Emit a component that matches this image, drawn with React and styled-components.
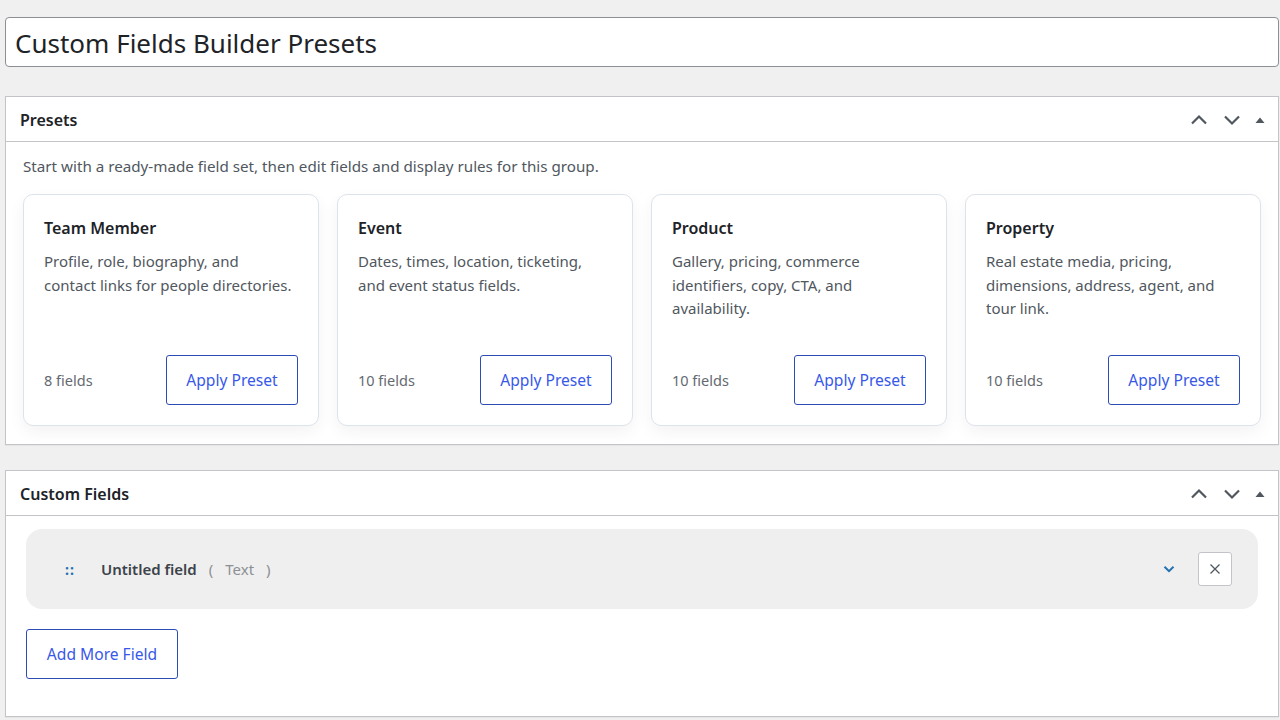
import React from "react";
import styled, { createGlobalStyle } from "styled-components";

const GlobalStyle = createGlobalStyle`
  html, body {
    margin: 0;
    padding: 0;
    background: #f0f0f1;
    font-family: "Noto Sans", "Open Sans", sans-serif;
    color: #1d2327;
  }
`;

const presets = [
  {
    title: "Team Member",
    desc: "Profile, role, biography, and contact links for people directories.",
    count: 8,
  },
  {
    title: "Event",
    desc: "Dates, times, location, ticketing, and event status fields.",
    count: 10,
  },
  {
    title: "Product",
    desc: "Gallery, pricing, commerce identifiers, copy, CTA, and availability.",
    count: 10,
  },
  {
    title: "Property",
    desc: "Real estate media, pricing, dimensions, address, agent, and tour link.",
    count: 10,
  },
];

function App() {
  return (
    <>
      <GlobalStyle />
      <Page>
        <TitleInput>Custom Fields Builder Presets</TitleInput>

        <Box $gap="29px">
          <BoxHeader>
            <BoxTitle>Presets</BoxTitle>
            <HeaderControls />
          </BoxHeader>
          <PresetsBody>
            <Intro>
              Start with a ready-made field set, then edit fields and display
              rules for this group.
            </Intro>
            <CardGrid>
              {presets.map((p) => (
                <Card key={p.title}>
                  <CardTitle>{p.title}</CardTitle>
                  <CardDesc>{p.desc}</CardDesc>
                  <CardFooter>
                    <FieldCount>{p.count} fields</FieldCount>
                    <OutlineButton>Apply Preset</OutlineButton>
                  </CardFooter>
                </Card>
              ))}
            </CardGrid>
          </PresetsBody>
        </Box>

        <Box $gap="25px">
          <BoxHeader>
            <BoxTitle>Custom Fields</BoxTitle>
            <HeaderControls />
          </BoxHeader>
          <FieldsBody>
            <FieldRow>
              <Handle>::</Handle>
              <FieldName>Untitled field</FieldName>
              <FieldType>
                <span>(</span>
                <span>Text</span>
                <span>)</span>
              </FieldType>
              <RowSpacer />
              <Toggle>
                <svg width="14" height="14" viewBox="0 0 14 14">
                  <path
                    d="M2.5 4.8 L7 9.2 L11.5 4.8"
                    fill="none"
                    stroke="#2271b1"
                    strokeWidth="2"
                  />
                </svg>
              </Toggle>
              <RemoveButton>
                <svg width="12" height="12" viewBox="0 0 12 12">
                  <path
                    d="M1.5 1.5 L10.5 10.5 M10.5 1.5 L1.5 10.5"
                    stroke="#50575e"
                    strokeWidth="1.3"
                  />
                </svg>
              </RemoveButton>
            </FieldRow>
            <div>
              <OutlineButton $wide>Add More Field</OutlineButton>
            </div>
          </FieldsBody>
        </Box>
      </Page>
    </>
  );
}

function HeaderControls() {
  return (
    <Controls>
      <CtrlButton>
        <svg width="20" height="20" viewBox="0 0 20 20">
          <path
            d="M3 13.5 L10 6.5 L17 13.5"
            fill="none"
            stroke="#50575e"
            strokeWidth="2.2"
          />
        </svg>
      </CtrlButton>
      <CtrlButton>
        <svg width="20" height="20" viewBox="0 0 20 20">
          <path
            d="M3 6.5 L10 13.5 L17 6.5"
            fill="none"
            stroke="#50575e"
            strokeWidth="2.2"
          />
        </svg>
      </CtrlButton>
      <CtrlButton $small>
        <svg width="12" height="12" viewBox="0 0 12 12">
          <path d="M1.5 9 L6 3.5 L10.5 9 Z" fill="#50575e" />
        </svg>
      </CtrlButton>
    </Controls>
  );
}

export default App;

const Page = styled.div`
  padding: 17px 1px 4px 5px;
  display: flex;
  flex-direction: column;
`;

const TitleInput = styled.div`
  height: 50px;
  box-sizing: border-box;
  border: 1px solid #8c8f94;
  border-radius: 4px;
  background: #fff;
  display: flex;
  align-items: center;
  padding: 2px 9px 0;
  font-size: 26px;
  color: #1d2327;
`;

const Box = styled.div`
  margin-top: ${(p) => p.$gap};
  background: #fff;
  border: 1px solid #c3c4c7;
  box-shadow: 0 1px 1px rgba(0, 0, 0, 0.04);
`;

const BoxHeader = styled.div`
  height: 45px;
  display: flex;
  align-items: center;
  justify-content: space-between;
  padding: 1px 6px 0 14px;
  box-sizing: border-box;
  border-bottom: 1px solid #c3c4c7;
`;

const BoxTitle = styled.h2`
  margin: 0;
  font-size: 16px;
  font-weight: 600;
  color: #1d2327;
`;

const Controls = styled.div`
  display: flex;
  align-items: center;
`;

const CtrlButton = styled.span`
  width: ${(p) => (p.$small ? "24px" : "33px")};
  height: 36px;
  display: flex;
  align-items: center;
  justify-content: center;
`;

const PresetsBody = styled.div`
  padding: 13px 17px 18px 17px;
`;

const Intro = styled.p`
  margin: 0 0 17px;
  font-size: 15.2px;
  line-height: 22px;
  color: #50575e;
`;

const CardGrid = styled.div`
  display: grid;
  grid-template-columns: repeat(4, 1fr);
  gap: 18px;
`;

const Card = styled.div`
  height: 232px;
  box-sizing: border-box;
  border: 1px solid #dde3ea;
  border-radius: 10px;
  background: #fff;
  box-shadow: 0 6px 16px rgba(15, 23, 42, 0.05);
  padding: 21px 20px 20px;
  display: flex;
  flex-direction: column;
`;

const CardTitle = styled.h3`
  margin: 0 0 10px;
  font-size: 16px;
  font-weight: 600;
  color: #1d2327;
  line-height: 24px;
`;

const CardDesc = styled.p`
  margin: 0;
  max-width: 249px;
  font-size: 15px;
  line-height: 23.5px;
  color: #50575e;
  flex: 1;
`;

const CardFooter = styled.div`
  display: flex;
  align-items: center;
  justify-content: space-between;
`;

const FieldCount = styled.span`
  font-size: 14.5px;
  color: #646970;
`;

const OutlineButton = styled.button`
  height: 50px;
  width: ${(p) => (p.$wide ? "152px" : "132px")};
  box-sizing: border-box;
  border: 1px solid #2c4db5;
  border-radius: 3px;
  background: #fff;
  color: #3858e9;
  font-family: inherit;
  font-size: 15.6px;
  padding: 0;
  cursor: pointer;
`;

const FieldsBody = styled.div`
  padding: 13px 20px 37px;
  display: flex;
  flex-direction: column;
  gap: 20px;
`;

const FieldRow = styled.div`
  height: 80px;
  box-sizing: border-box;
  background: #efefef;
  border-radius: 16px;
  display: flex;
  align-items: center;
  padding: 0 26px 0 39px;
`;

const Handle = styled.span`
  color: #2271b1;
  font-weight: 700;
  font-size: 14px;
  width: 36px;
  letter-spacing: 1px;
`;

const FieldName = styled.span`
  font-size: 15px;
  font-weight: 600;
  color: #3c434a;
`;

const FieldType = styled.span`
  margin-left: 12px;
  display: flex;
  gap: 12px;
  font-size: 15px;
  color: #8c8f94;
`;

const RowSpacer = styled.span`
  flex: 1;
`;

const Toggle = styled.span`
  display: flex;
  align-items: center;
  margin-right: 22px;
`;

const RemoveButton = styled.span`
  width: 34px;
  height: 34px;
  box-sizing: border-box;
  border: 1px solid #c3c4c7;
  border-radius: 3px;
  background: #fff;
  display: flex;
  align-items: center;
  justify-content: center;
`;
